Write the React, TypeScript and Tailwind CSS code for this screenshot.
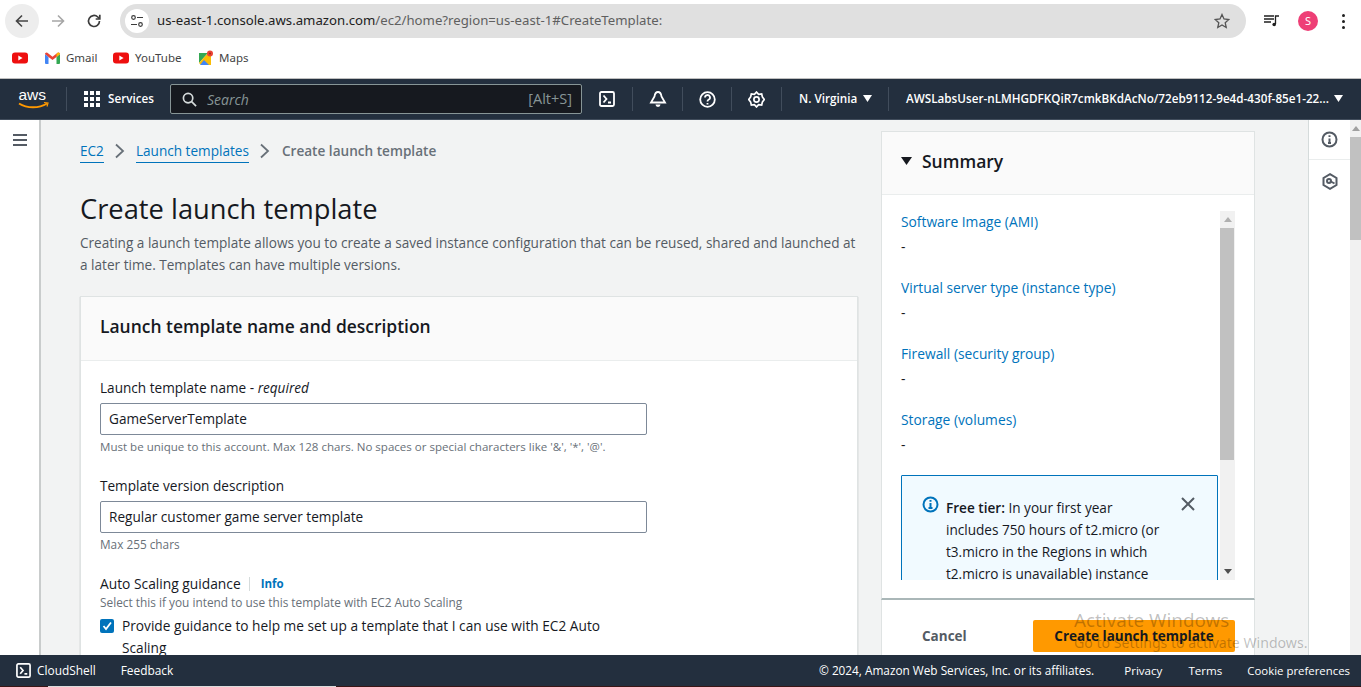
import React from "react";

const ember = "font-['Open_Sans','Noto_Sans',sans-serif]";

function Yt() {
  return (
    <svg width="16" height="12" viewBox="0 0 16 12">
      <rect width="16" height="11" y="0.5" rx="3" fill="#ee0f0f" />
      <path d="M6.300 3.500v5l4.300-2.500z" fill="#fff" />
    </svg>
  );
}
function Gmail() {
  return (
    <svg width="15" height="12" viewBox="0 0 15 12">
      <path d="M0 2v9a1 1 0 0 0 1 1h2.500V5z" fill="#4285f4" />
      <path d="M15 2v9a1 1 0 0 1-1 1h-2.500V5z" fill="#34a853" />
      <path d="M0 2a1.500 1.500 0 0 1 2.400-1.200L7.500 4.700 12.600.8A1.500 1.500 0 0 1 15 2L11.500 5 7.500 8 3.500 5z" fill="#ea4335" />
      <path d="M11.500 1.900 12.600.8A1.500 1.500 0 0 1 15 2L11.500 5z" fill="#fbbc04" />
    </svg>
  );
}
function Maps() {
  return (
    <svg width="16" height="16" viewBox="0 0 16 16">
      <path d="M1 3h9L1 13z" fill="#34a853" />
      <path d="M1 13 10 3l3 3v9H3z" fill="#fbbc04" />
      <path d="M6 10l5 5H2z" fill="#4285f4" />
      <path d="M1 3h4v4L1 11z" fill="#34a853" />
      <circle cx="12" cy="3.500" r="3" fill="#ea4335" />
      <circle cx="12" cy="3.500" r="1" fill="#a52714" />
    </svg>
  );
}
function Terminal({ size = 16, color = "#fff" }: { size?: number; color?: string }) {
  return (
    <svg width={size} height={size} viewBox="0 0 16 16" fill="none" stroke={color} strokeWidth="1.800">
      <rect x="1" y="1" width="14" height="14" rx="1.500" />
      <path d="M4.500 4.500 7.500 8l-3 3.500M9 11.500h3" />
    </svg>
  );
}
function NavSep() {
  return <div className="w-px h-[24px] bg-[#414d5c] shrink-0" />;
}
function Field({ value }: { value: string }) {
  return (
    <div className="h-[32px] w-[547px] border border-[#7d8998] rounded-[2px] bg-white px-[8px] pt-[1px] flex items-center text-[13.600px] text-[#16191f]">
      {value}
    </div>
  );
}
function SumItem({ label }: { label: string }) {
  return (
    <div className="h-[66px]">
      <div className="text-[13.800px] leading-[22px] text-[#0073bb]">{label}</div>
      <div className="text-[13.800px] leading-[22px] mt-[3px] text-[#16191f]">-</div>
    </div>
  );
}

export default function App() {
  return (
    <div className={`h-[687px] w-[1361px] overflow-hidden flex flex-col bg-white ${ember}`}>
      {/* Browser toolbar */}
      <div className="h-[40px] pt-[2px] flex items-center pl-[5px] shrink-0">
        <div className="w-[34px] h-[34px] rounded-full bg-[#ededed] flex items-center justify-center">
          <svg width="16" height="16" viewBox="0 0 16 16" fill="none" stroke="#444" strokeWidth="1.600"><path d="M14 8H2.500M8 2.500 2.500 8 8 13.500" /></svg>
        </div>
        <div className="w-[36px] flex justify-center ml-[1px]">
          <svg width="16" height="16" viewBox="0 0 16 16" fill="none" stroke="#a6a6a6" strokeWidth="1.600"><path d="M2 8h11.500M8 2.500 13.500 8 8 13.500" /></svg>
        </div>
        <div className="w-[36px] flex justify-center">
          <svg width="16" height="16" viewBox="0 0 16 16" fill="none" stroke="#3c3c3c" strokeWidth="1.700"><path d="M13.500 8A5.500 5.500 0 1 1 11.800 4L13.500 5.700" /><path d="M13.800 1.800v4.200H9.700" /></svg>
        </div>
        <div className="ml-[8px] w-[1126px] h-[34px] rounded-full bg-[#e0e0e0] flex items-center pl-[5px] pr-[16px]">
          <div className="w-[24px] h-[24px] rounded-full bg-white flex items-center justify-center">
            <svg width="14" height="14" viewBox="0 0 14 14" fill="none" stroke="#3c3c3c" strokeWidth="1.200"><circle cx="3.500" cy="3.500" r="1.800" /><path d="M7 3.500h6M1 10.500h6" /><circle cx="10.500" cy="10.500" r="1.800" /></svg>
          </div>
          <div className="ml-[8px] text-[13.200px] font-['Noto_Sans',sans-serif] flex-1 text-[#5f5f5f]">
            <span className="text-[#202020]">us-east-1.console.aws.amazon.com</span>/ec2/home?region=us-east-1#CreateTemplate:
          </div>
          <svg width="16" height="16" viewBox="0 0 16 16" fill="none" stroke="#555" strokeWidth="1.300"><path d="M8 1.500 10 6l4.800.5-3.600 3.200 1 4.800L8 12l-4.200 2.500 1-4.800L1.200 6.500 6 6z" /></svg>
        </div>
        <div className="w-[16px] ml-[18px] flex justify-center">
          <svg width="16" height="14" viewBox="0 0 16 14" fill="none" stroke="#202020" strokeWidth="1.300"><path d="M0 2h10M0 5h10M0 8h7" /><path d="M11.500 10V2H15" /><circle cx="10.200" cy="10.500" r="1.800" fill="#202020" stroke="none" /></svg>
        </div>
        <div className="ml-[18px] w-[20px] h-[20px] rounded-full bg-[#ee3f76] flex items-center justify-center text-white text-[11px] font-['Noto_Sans',sans-serif]">S</div>
        <div className="ml-[24px] flex flex-col gap-[3px] items-center">
          <div className="w-[3px] h-[3px] rounded-full bg-[#202020]" />
          <div className="w-[3px] h-[3px] rounded-full bg-[#202020]" />
          <div className="w-[3px] h-[3px] rounded-full bg-[#202020]" />
        </div>
      </div>
      {/* Bookmarks */}
      <div className="h-[38px] pb-[2px] flex items-center pl-[12px] text-[11.500px] text-[#444] font-['Noto_Sans',sans-serif] shrink-0">
        <Yt />
        <div className="ml-[17px] flex items-center gap-[6px]"><Gmail /><span className="w-[32px]">Gmail</span></div>
        <div className="ml-[15px] flex items-center gap-[6px]"><Yt /><span className="w-[46px]">YouTube</span></div>
        <div className="ml-[17px] flex items-center gap-[5px]"><Maps /><span>Maps</span></div>
      </div>
      {/* AWS nav */}
      <div className="h-[42px] shrink-0 bg-[#232f3e] border-t border-t-[#bfbfbf] border-b border-b-[#414d5c] flex items-center text-white text-[11.700px] font-semibold">
        <div className="w-[66px] pl-[18px] shrink-0">
          <svg width="32" height="22" viewBox="0 0 32 22" className="overflow-visible">
            <text x="0.500" y="12" fill="#fff" fontSize="15.500" fontWeight="400" fontFamily="'Liberation Sans',sans-serif">aws</text>
            <path d="M1 15.500c8 5 20 5 28 0" fill="none" stroke="#f90" strokeWidth="1.800" />
            <path d="M26 14.500l4 .5-1 3.500" fill="none" stroke="#f90" strokeWidth="1.200" />
          </svg>
        </div>
        <NavSep />
        <div className="ml-[17px] grid grid-cols-3 gap-[2px] shrink-0">
          {Array.from({ length: 9 }).map((_, i) => (
            <div key={i} className="w-[4px] h-[4px] bg-white" />
          ))}
        </div>
        <div className="ml-[8px] w-[54px] shrink-0">Services</div>
        <div className="ml-[8px] w-[412px] h-[30px] shrink-0 bg-[#16191f] border border-[#879596] rounded-[2px] flex items-center pl-[11px] pr-[9px]">
          <svg width="15" height="15" viewBox="0 0 16 16" fill="none" stroke="#d5dbdb" strokeWidth="1.800"><circle cx="6.500" cy="6.500" r="5" /><path d="m10 10 5 5" /></svg>
          <span className="ml-[10px] italic font-normal text-[14px] text-[#879596] flex-1">Search</span>
          <span className="font-normal text-[14.500px] text-[#879596]">[Alt+S]</span>
        </div>
        <div className="w-[50px] flex justify-center shrink-0"><Terminal /></div>
        <NavSep />
        <div className="w-[49px] flex justify-center shrink-0">
          <svg width="18" height="18" viewBox="0 0 18 18" fill="none" stroke="#fff" strokeWidth="1.800"><path d="M9 2C6.800 2 5.800 4.200 5.500 6.500L2 12.500h14l-3.500-6C12.200 4.200 11.200 2 9 2z" /><path d="M6.500 14.500a2.500 2.500 0 0 0 5 0z" fill="#fff" stroke="none" /></svg>
        </div>
        <NavSep />
        <div className="w-[48px] flex justify-center shrink-0">
          <svg width="17" height="17" viewBox="0 0 17 17" fill="none" stroke="#fff" strokeWidth="1.800"><circle cx="8.500" cy="8.500" r="7.300" /><path d="M6 6.500a2.500 2.500 0 1 1 3.500 2.300c-.8.400-1 .8-1 1.700" /><path d="M8.500 12v1.500" /></svg>
        </div>
        <NavSep />
        <div className="w-[49px] flex justify-center shrink-0">
          <svg width="17" height="17" viewBox="0 0 24 24" fill="none" stroke="#fff" strokeWidth="2.400"><path d="M12 1.500 15 4.700l4.300-.5 1 4.200L23 12l-2.700 3.600-1 4.200-4.300-.5L12 22.500l-3-3.200-4.300.5-1-4.200L1 12l2.700-3.600 1-4.200 4.300.5z" /><circle cx="12" cy="12" r="3.700" /></svg>
        </div>
        <NavSep />
        <div className="ml-[17px] w-[89px] flex items-center gap-[6px] shrink-0">
          <span>N. Virginia</span>
          <svg width="9" height="7" viewBox="0 0 9 7"><path d="M0 0h9L4.500 7z" fill="#fff" /></svg>
        </div>
        <NavSep />
        <div className="ml-[17px] flex items-center gap-[5px] shrink-0">
          <span className="whitespace-nowrap">AWSLabsUser-nLMHGDFKQiR7cmkBKdAcNo/72eb9112-9e4d-430f-85e1-22...</span>
          <svg width="9" height="7" viewBox="0 0 9 7"><path d="M0 0h9L4.500 7z" fill="#fff" /></svg>
        </div>
      </div>
      {/* Body */}
      <div className="flex-1 flex min-h-0 relative">
        <div className="w-[41px] shrink-0 bg-white border-r-2 border-r-[#c9cccc] pt-[14px] pl-[13px]">
          <div className="w-[14px] flex flex-col gap-[3px]">
            <div className="h-[2px] bg-[#545b64]" />
            <div className="h-[2px] bg-[#545b64]" />
            <div className="h-[2px] bg-[#545b64]" />
          </div>
        </div>
        <div className="flex-1 bg-[#f2f3f3] flex min-w-0 overflow-hidden">
          <div className="w-[817px] pl-[39px] shrink-0">
            <div className="h-[22px] mt-[20px] flex items-center text-[13.600px] leading-[22px]">
              <span className="text-[#0073bb] border-b border-[#0073bb]">EC2</span>
              <svg className="mx-[10px]" width="12" height="16" viewBox="0 0 12 16" fill="none" stroke="#687078" strokeWidth="1.800"><path d="m2 1.500 7 6.500-7 6.500" /></svg>
              <span className="text-[#0073bb] border-b border-[#0073bb]">Launch templates</span>
              <svg className="ml-[10px] mr-[11px]" width="12" height="16" viewBox="0 0 12 16" fill="none" stroke="#687078" strokeWidth="1.800"><path d="m2 1.500 7 6.500-7 6.500" /></svg>
              <span className="font-semibold text-[#687078]">Create launch template</span>
            </div>
            <h1 className="mt-[29px] text-[27.300px] leading-[36px] text-[#16191f]">Create launch template</h1>
            <p className="mt-[5px] text-[13.600px] leading-[22px] text-[#545b64] w-[778px]">
              Creating a launch template allows you to create a saved instance configuration that can be reused, shared and launched at a later time. Templates can have multiple versions.
            </p>
            <div className="mt-[20px] w-[778px] bg-white border-t border-x border-[#dfe3e3] shadow-[0_1px_1px_0_rgba(0,28,36,0.3)] h-[400px]">
              <div className="h-[64px] bg-[#fafafa] border-b border-[#eaeded] pl-[19px] pb-[4px] flex items-center text-[17.450px] font-semibold text-[#16191f]">
                Launch template name and description
              </div>
              <div className="pl-[19px] pt-[16px] text-[13.600px] text-[#16191f]">
                <div className="leading-[22px]">Launch template name - <i className="font-normal">required</i></div>
                <div className="mt-[4px]"><Field value="GameServerTemplate" /></div>
                <div className="mt-[3px] text-[11.550px] leading-[18px] text-[#687078]">Must be unique to this account. Max 128 chars. No spaces or special characters like '&amp;', '*', '@'.</div>
                <div className="mt-[19px] leading-[22px]">Template version description</div>
                <div className="mt-[4px]"><Field value="Regular customer game server template" /></div>
                <div className="mt-[2px] text-[11.800px] leading-[18px] text-[#687078]">Max 255 chars</div>
                <div className="mt-[20px] flex items-center leading-[22px] text-[13.800px]">
                  <span>Auto Scaling guidance</span>
                  <span className="ml-[8px] w-px h-[14px] bg-[#d5dbdb]" />
                  <span className="ml-[11px] text-[11.500px] font-bold text-[#0073bb]">Info</span>
                </div>
                <div className="text-[11.850px] leading-[14px] text-[#687078]">Select this if you intend to use this template with EC2 Auto Scaling</div>
                <div className="mt-[6px] flex items-start leading-[22px] text-[13.700px]">
                  <div className="mt-[4px] w-[14px] h-[14px] rounded-[2px] bg-[#0073bb] shrink-0 flex items-center justify-center">
                    <svg width="10" height="10" viewBox="0 0 10 10" fill="none" stroke="#fff" strokeWidth="1.800"><path d="m1.500 5 2.500 3 5-6.500" /></svg>
                  </div>
                  <div className="ml-[8px] w-[490px]">Provide guidance to help me set up a template that I can use with EC2 Auto Scaling</div>
                </div>
              </div>
            </div>
          </div>
          {/* Summary */}
          <div className="mt-[11px] ml-[23px] w-[374px] shrink-0 flex flex-col h-[524px]">
            <div className="h-[469px] bg-white border border-[#dfe3e3] border-b-[#aab7b8] border-b-2 flex flex-col shrink-0">
              <div className="h-[63px] bg-[#fafafa] border-b border-[#eaeded] flex items-center pl-[19px] pb-[4px] shrink-0">
                <svg width="11" height="8" viewBox="0 0 11 8"><path d="M0 0h11L5.500 8z" fill="#16191f" /></svg>
                <span className="ml-[10px] text-[17.500px] font-semibold text-[#16191f]">Summary</span>
              </div>
              <div className="flex-1 flex pl-[19px] pt-[16px] min-h-0">
                <div className="w-[319px] h-[369px] overflow-hidden shrink-0">
                  <SumItem label="Software Image (AMI)" />
                  <SumItem label="Virtual server type (instance type)" />
                  <SumItem label="Firewall (security group)" />
                  <SumItem label="Storage (volumes)" />
                  <div className="h-[200px] w-[317px] bg-[#f1faff] border border-[#0073bb] rounded-[1px] relative pl-[44px] pt-[21px] text-[13.600px] leading-[22px] text-[#16191f]">
                    <svg className="absolute left-[20px] top-[20px]" width="17" height="17" viewBox="0 0 17 17" fill="none" stroke="#0073bb" strokeWidth="2"><circle cx="8.500" cy="8.500" r="7" /><path d="M8.500 7v5M6.500 12h4M8.500 4v1.800" /></svg>
                    <svg className="absolute left-[279px] top-[21px]" width="14" height="14" viewBox="0 0 14 14" fill="none" stroke="#545b64" strokeWidth="2"><path d="m1 1 12 12M13 1 1 13" /></svg>
                    <div className="w-[218px]">
                      <b className="font-semibold">Free tier:</b> In your first year includes 750 hours of t2.micro (or t3.micro in the Regions in which t2.micro is unavailable) instance
                    </div>
                  </div>
                </div>
                <div className="w-[15px] h-[369px] bg-[#f1f1f1] flex flex-col shrink-0">
                  <div className="h-[17px] flex items-center justify-center"><svg width="8" height="5" viewBox="0 0 8 5"><path d="M4 0l4 5H0z" fill="#b0b0b0" /></svg></div>
                  <div className="h-[232px] w-[14px] bg-[#c1c1c1]" />
                  <div className="flex-1" />
                  <div className="h-[17px] flex items-center justify-center"><svg width="8" height="5" viewBox="0 0 8 5"><path d="M0 0h8L4 5z" fill="#505050" /></svg></div>
                </div>
              </div>
            </div>
            <div className="flex-1 bg-white border-x border-[#dfe3e3] flex items-start pl-[40px] pt-[20px]">
              <span className="w-[111px] shrink-0 h-[32px] flex items-center text-[13.500px] font-bold text-[#545b64]">Cancel</span>
              <div className="w-[202px] h-[32px] bg-[#ff9900] rounded-[2px] flex items-center justify-center text-[13.500px] font-bold text-[#16191f]">Create launch template</div>
            </div>
          </div>
        </div>
        {/* Right rail */}
        <div className="w-[42px] shrink-0 bg-white border-l border-l-[#d5dbdb]">
          <div className="h-[40px] border-b border-[#eaeded] flex items-center justify-center">
            <svg width="17" height="17" viewBox="0 0 17 17" fill="none" stroke="#545b64" strokeWidth="2"><circle cx="8.500" cy="8.500" r="7" /><path d="M8.500 7.500v4.500M7 12h3M8.500 4.200v1.700" /></svg>
          </div>
          <div className="h-[42px] flex items-center justify-center">
            <svg width="16" height="17" viewBox="0 0 16 17" fill="none" stroke="#545b64" strokeWidth="2"><path d="M8 1.200 14.500 5v7L8 15.800 1.500 12V5z" /><path d="M8 8l4.500 2.500" /><circle cx="7" cy="8" r="2" /></svg>
          </div>
        </div>
        {/* Page scrollbar */}
        <div className="w-[11px] shrink-0 bg-[#f1f1f1] flex flex-col">
          <div className="h-[17px] flex items-center justify-center"><svg width="8" height="5" viewBox="0 0 8 5"><path d="M4 0l4 5H0z" fill="#a0a0a0" /></svg></div>
          <div className="h-[103px] bg-[#c1c1c1]" />
        </div>
        {/* Activate Windows watermark */}
        <div className="absolute left-[1074px] top-[488px] pointer-events-none font-['Noto_Sans',sans-serif] text-[#000]/25 whitespace-nowrap">
          <div className="text-[18.800px] leading-[24px]">Activate Windows</div>
          <div className="mt-[2px] text-[14.100px] leading-[18px]">Go to Settings to activate Windows.</div>
        </div>
      </div>
      {/* Footer */}
      <div className="h-[31px] shrink-0 bg-[#232f3e] flex items-center text-white text-[11.600px] font-medium pl-[16px] pr-[11px]">
        <Terminal size={15} />
        <span className="ml-[6px] text-[11.900px]">CloudShell</span>
        <span className="ml-[25px] text-[11.900px]">Feedback</span>
        <span className="ml-auto text-[11.800px]">© 2024, Amazon Web Services, Inc. or its affiliates.</span>
        <span className="ml-[30px]">Privacy</span>
        <span className="ml-[26px]">Terms</span>
        <span className="ml-[25px] text-[11.400px]">Cookie preferences</span>
      </div>
      <div className="h-[1px] shrink-0 flex bg-[#3a1616]">
        <div className="ml-[48px] w-[288px] bg-[#dcdcdc]" />
      </div>
    </div>
  );
}
